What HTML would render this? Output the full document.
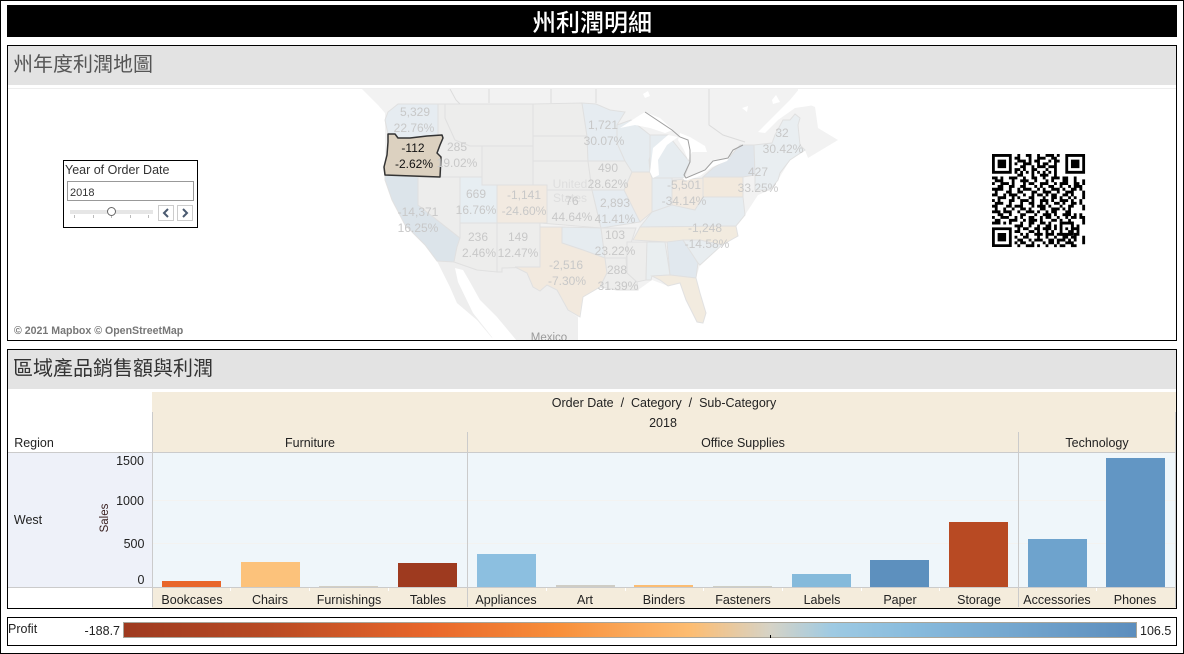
<!DOCTYPE html>
<html lang="zh-Hant">
<head>
<meta charset="utf-8">
<title>州利潤明細</title>
<style>
html,body{margin:0;padding:0;background:#fff;width:1184px;height:654px;overflow:hidden}
svg{display:block}
text{font-family:"Liberation Sans","Noto Sans CJK TC",sans-serif}
.l text{font-size:12px;fill:#c8c8c8;text-anchor:middle}
.t text{font-size:12.5px;fill:#222;text-anchor:middle}
.s polygon{stroke:#dedede;stroke-width:1}
</style>
</head>
<body>
<svg width="1184" height="654" viewBox="0 0 1184 654" xmlns="http://www.w3.org/2000/svg">
<defs>
<clipPath id="mc"><rect x="8" y="89" width="1168" height="251"/></clipPath>
<linearGradient id="lg" x1="0" x2="1" y1="0" y2="0">
<stop offset="0" stop-color="#9e3a1f"/>
<stop offset=".14" stop-color="#b84a23"/>
<stop offset=".3" stop-color="#e8662a"/>
<stop offset=".43" stop-color="#f88f3a"/>
<stop offset=".56" stop-color="#fdbd72"/>
<stop offset=".638" stop-color="#d6d3c6"/>
<stop offset=".7" stop-color="#9ecae3"/>
<stop offset=".78" stop-color="#88bbdd"/>
<stop offset="1" stop-color="#5b8dbd"/>
</linearGradient>
</defs>
<rect x=".5" y=".5" width="1183" height="653" fill="#fff" stroke="#000"/>
<rect x="7" y="5" width="1170" height="32" fill="#000"/>
<text x="592" y="31" font-size="24" font-weight="500" fill="#fff" text-anchor="middle">州利潤明細</text>

<rect x="7.5" y="45.5" width="1169" height="295" fill="#fff" stroke="#000"/>
<rect x="8" y="46" width="1168" height="39" fill="#e3e3e3"/>
<text x="13" y="71" font-size="20" fill="#555">州年度利潤地圖</text>
<rect x="8" y="88" width="1168" height="1" fill="#eee"/>

<g clip-path="url(#mc)">
<polygon fill="#f2f2f2" points="362,89 378,105 385,113 385,180 392,200 405,225 425,245 437,261 450,287 457,303 477,320 492,338 495,341 578,341 578,318 583,297 600,287 617,290 638,290 652,280 668,286 680,283 686,300 697,322 703,323 706,313 700,293 696,278 700,265 722,245 738,236 736,226 745,215 758,195 770,190 778,180 790,160 805,150 808,158 838,140 818,128 815,107 798,100 798,89"/>
<polygon fill="#eeeeee" points="437,261 454,262 477,270 497,272 502,272 502,268 515,267 527,273 533,287 540,291 547,285 557,290 568,310 578,318 578,341 495,341 477,320 457,303 450,287"/>
<polygon fill="#fff" points="455,268 463,270 470,282 480,300 497,317 517,341 493,341 492,337 473,313 458,282"/>
<polygon fill="#fff" points="758,132 778,112 790,100 800,88 842,88 842,102 815,105 795,108 778,120 765,133"/>
<g class="s" opacity=".85">
<polygon fill="#e4ecf1" points="388,112 398,104 438,104 438,135 427,136 410,138 398,138 395,134 388,134 385,120"/>
<polygon fill="#ededeb" points="438,104 445,104 445,118 455,140 470,146 482,146 482,177 441,177 441,157 437,153 440,145 443,138 442,135 438,135"/>
<polygon fill="#ededeb" points="445,104 533,104 533,146 470,146 455,140 445,118"/>
<polygon fill="#ebebea" points="482,146 533,146 533,185 482,185"/>
<polygon fill="#ededeb" points="533,104 582,103 587,136 533,136"/>
<polygon fill="#ededeb" points="533,136 587,136 588,161 533,161"/>
<polygon fill="#ededeb" points="533,161 588,161 592,190 547,190 547,185 533,185"/>
<polygon fill="#e4ecf1" points="582,103 596,104 610,110 625,112 617,125 617,143 625,161 588,161 587,136"/>
<polygon fill="#e5ecf0" points="617,125 631,120 650,135 650,147 652,150 649,160 650,172 630,172 625,161 617,143"/>
<polygon fill="#ededeb" points="588,161 625,161 632,172 624,190 592,190"/>
<polygon fill="#f2e9df" points="632,172 652,172 652,212 640,222 625,195 624,190"/>
<polygon fill="#e5ecf0" points="650,135 668,135 680,150 690,162 684,178 652,178 650,172"/>
<polygon fill="#e5ecf0" points="652,178 672,178 672,205 652,212"/>
<polygon fill="#f2e9df" points="672,180 703,178 703,197 695,210 675,208 672,205"/>
<polygon fill="#dde4ec" points="713,168 728,159 740,145 754,145 755,175 743,177 703,177"/>
<polygon fill="#f3e8da" points="703,177 743,177 743,197 703,197"/>
<polygon fill="#e5ecf0" points="640,227 652,212 672,205 695,210 703,197 743,197 745,215 736,226"/>
<polygon fill="#e8eef1" points="754,145 772,143 775,135 783,120 790,120 795,114 800,118 798,125 800,145 805,150 790,160 780,173 778,180 770,190 755,190 755,175"/>
<polygon fill="#d9e2e9" points="385,174 418,177 418,205 460,238 457,247 454,262 437,261 425,245 405,225 392,200 385,180"/>
<polygon fill="#ededeb" points="418,177 460,177 460,238 418,205"/>
<polygon fill="#e6eef2" points="460,177 482,177 482,185 497,185 497,223 460,223"/>
<polygon fill="#f2e9df" points="497,185 547,185 547,223 497,223"/>
<polygon fill="#ededeb" points="497,223 540,223 540,267 502,268 502,272 497,272"/>
<polygon fill="#ededeb" points="460,223 497,223 497,272 477,270 454,262 457,247 460,238"/>
<polygon fill="#ededeb" points="547,190 592,190 601,228 540,223 547,223"/>
<polygon fill="#e4ecf1" points="592,190 624,190 640,222 601,228"/>
<polygon fill="#e5ecf0" points="562,227 601,228 605,258 583,250 562,243"/>
<polygon fill="#ededeb" points="601,228 636,228 626,258 605,258"/>
<polygon fill="#f2e8db" points="540,227 562,227 562,243 583,250 605,258 607,273 600,287 583,297 580,317 568,310 557,290 547,285 540,291 533,287 527,273 515,267 540,267"/>
<polygon fill="#ededeb" points="605,258 626,258 627,273 637,282 638,290 617,290 600,287 607,273"/>
<polygon fill="#ededeb" points="627,242 647,242 646,280 637,282 627,273"/>
<polygon fill="#e8eef0" points="647,242 665,242 670,275 652,276 651,280 646,280"/>
<polygon fill="#f3eadc" points="633,240 640,227 736,226 738,236 722,245 700,240 667,242"/>
<polygon fill="#dfe7ee" points="667,242 683,240 698,263 696,278 670,275"/>
<polygon fill="#e7edf0" points="683,240 700,240 722,245 700,265 698,263"/>
<polygon fill="#f3eadc" points="652,276 670,275 696,278 700,293 706,313 703,323 697,322 686,300 680,283 668,286 660,280"/>
</g>
<g fill="#fff">
<polygon points="620,128 640,115 645,112 660,118 673,130 665,133 650,128 635,125"/>
<polygon points="650,172 653,148 668,135 678,137 667,145 658,160 659,175 653,178"/>
<polygon points="680,133 690,137 705,146 707,152 692,152 688,160 684,150 678,140"/>
<polygon points="683,178 706,170 713,160 730,157 727,161 712,167 700,176 685,181"/>
<polygon points="643,94 648,91 650,96 645,98"/>
<polygon points="742,108 748,106 747,112"/>
<polygon points="772,100 776,95 780,102 773,104"/>
</g>
<polyline fill="none" stroke="#a0a0a0" points="645,112 672,130 680,137 688,140 690,150 690,162 684,175 686,178 705,170 713,161 728,158 733,150 743,145"/>
<polyline fill="none" stroke="#dcdcdc" points="450,89 456,100 460,104"/>
<polyline fill="none" stroke="#dcdcdc" points="489,89 489,103"/>
<polyline fill="none" stroke="#dcdcdc" points="551,89 551,103"/>
<polyline fill="none" stroke="#dcdcdc" points="596,89 596,103"/>
<polyline fill="none" stroke="#dcdcdc" points="709,89 709,125 723,135 745,142"/>
<polygon fill="#dcd1c0" stroke="#333" stroke-width="1.5" stroke-linejoin="round" points="388,134 395,134 398,138 410,138 427,136 442,135 443,138 440,145 437,153 441,157 440,177 385,175 384,167 387,155 388,142"/>
<g class="l">
<text x="415" y="116">5,329</text><text x="414" y="132">22.76%</text>
<text x="457" y="151">285</text><text x="457" y="167">19.02%</text>
<text x="476" y="198">669</text><text x="476" y="214">16.76%</text>
<text x="524" y="199">-1,141</text><text x="524" y="215">-24.60%</text>
<text x="570" y="188" style="fill:#dedede">United</text><text x="570" y="202" style="fill:#dedede">States</text>
<text x="572" y="205">76</text><text x="572" y="221">44.64%</text>
<text x="603" y="129">1,721</text><text x="604" y="145">30.07%</text>
<text x="608" y="172">490</text><text x="608" y="188">28.62%</text>
<text x="615" y="207">2,893</text><text x="615" y="223">41.41%</text>
<text x="684" y="189">-5,501</text><text x="684" y="205">-34.14%</text>
<text x="758" y="176">427</text><text x="758" y="192">33.25%</text>
<text x="782" y="137">32</text><text x="783" y="153">30.42%</text>
<text x="418" y="216">-14,371</text><text x="418" y="232">16.25%</text>
<text x="478" y="241">236</text><text x="479" y="257">2.46%</text>
<text x="518" y="241">149</text><text x="518" y="257">12.47%</text>
<text x="566" y="269">-2,516</text><text x="567" y="285">-7.30%</text>
<text x="615" y="239">103</text><text x="615" y="255">23.22%</text>
<text x="617" y="274">288</text><text x="618" y="290">31.39%</text>
<text x="705" y="232">-1,248</text><text x="707" y="248">-14.58%</text>
<text x="549" y="341" style="fill:#9a9a9a;font-size:11.5px">Mexico</text>
</g>
</g>
<text x="413" y="152" font-size="12" fill="#111" text-anchor="middle">-112</text>
<text x="414" y="168" font-size="12" fill="#111" text-anchor="middle">-2.62%</text>
<text x="14" y="334" font-size="10.6" font-weight="700" fill="#777">© 2021 Mapbox © OpenStreetMap</text>

<rect x="63.5" y="160.5" width="134" height="67" fill="#fff" stroke="#000"/>
<text x="65" y="174" font-size="12.5" fill="#333">Year of Order Date</text>
<rect x="67.5" y="181.5" width="126" height="19" fill="#fff" stroke="#999"/>
<text x="70" y="196" font-size="11" fill="#333">2018</text>
<rect x="70" y="210" width="83" height="4" fill="#e6e6e6"/>
<path d="M74.5 215v3M93.5 215v3M111.5 215v3M130.5 215v3M148.5 215v3" stroke="#bbb" fill="none"/>
<circle cx="111.5" cy="211.5" r="4" fill="#fff" stroke="#666"/>
<rect x="158.5" y="205.5" width="15" height="15" fill="#fff" stroke="#ccc"/>
<rect x="177.5" y="205.5" width="15" height="15" fill="#fff" stroke="#ccc"/>
<path d="M168 209l-4 4 4 4" fill="none" stroke="#4a5a70" stroke-width="2"/>
<path d="M183 209l4 4-4 4" fill="none" stroke="#4a5a70" stroke-width="2"/>

<g transform="translate(992 154) scale(2.82)">
<path fill="#000" fill-rule="evenodd" d="M0 0h7v7H0zM1 1v5h5V1zM2 2h3v3H2zM26 0h7v7h-7zM27 1v5h5V1zM28 2h3v3h-3zM0 26h7v7H0zM1 27v5h5v-5zM2 28h3v3H2zM24 24h5v5h-5zM25 25v3h3v-3zM26 26h1v1h-1z"/>
<path fill="none" stroke="#000" stroke-width="1.02" d="
M9 .5h1m2 0h2m2 0h1m2 0h3m1 0h1
M8 1.5h2m3 0h1m2 0h3m2 0h2
M9 2.5h3m1 0h1m1 0h2m3 0h1m1 0h2
M8 3.5h1m2 0h3m2 0h1m1 0h2m2 0h1
M10 4.5h2m2 0h1m1 0h3m1 0h3
M8 5.5h2m1 0h1m2 0h2m3 0h1m2 0h1
M8 6.5h1m1 0h1m1 0h1m1 0h1m1 0h1m1 0h1m1 0h1m1 0h1
M9 7.5h2m3 0h1m2 0h3m2 0h1
M0 8.5h2m1 0h1m2 0h3m2 0h1m2 0h2m2 0h1m2 0h3m1 0h2m2 0h1
M1 9.5h3m3 0h1m2 0h3m2 0h1m3 0h1m1 0h1m3 0h2m2 0h1
M0 10.5h1m2 0h3m1 0h1m3 0h1m1 0h2m2 0h3m2 0h1m1 0h3m2 0h2
M2 11.5h2m2 0h2m2 0h2m3 0h1m1 0h1m2 0h2m2 0h1m2 0h1m1 0h2
M0 12.5h4m2 0h1m2 0h1m1 0h3m2 0h1m1 0h1m2 0h3m1 0h1m2 0h2
M1 13.5h1m3 0h2m2 0h2m3 0h2m2 0h3m2 0h1m2 0h3
M0 14.5h2m2 0h1m1 0h3m2 0h1m2 0h1m1 0h2m1 0h1m1 0h2m2 0h2m1 0h1
M2 15.5h3m2 0h1m1 0h1m3 0h2m3 0h1m2 0h2m1 0h1m2 0h1m1 0h1
M0 16.5h1m1 0h1m3 0h2m2 0h3m1 0h1m2 0h3m1 0h1m2 0h3m1 0h1
M1 17.5h3m2 0h1m3 0h1m2 0h2m2 0h1m1 0h1m2 0h2m1 0h1m2 0h2
M0 18.5h2m3 0h2m1 0h3m3 0h1m1 0h3m1 0h1m3 0h1m2 0h2
M1 19.5h1m2 0h1m2 0h1m2 0h2m1 0h1m3 0h2m2 0h3m1 0h1m1 0h1
M0 20.5h3m1 0h3m2 0h1m2 0h3m1 0h1m2 0h1m1 0h2m3 0h2
M2 21.5h2m2 0h1m3 0h2m3 0h1m2 0h3m1 0h1m2 0h3m1 0h1
M0 22.5h1m2 0h3m2 0h1m1 0h1m2 0h2m2 0h1m1 0h2m2 0h1m2 0h1m1 0h2
M1 23.5h2m3 0h3m2 0h1m1 0h3m1 0h1m3 0h2m1 0h1m2 0h1
M0 24.5h3m1 0h1m1 0h1m3 0h1m2 0h2m2 0h2m1 0h1m6 0h2
M8 25.5h3m2 0h1m2 0h1m2 0h2m1 0h1m5 0h1m1 0h1
M9 26.5h1m1 0h2m2 0h2m1 0h3m1 0h1m5 0h3
M8 27.5h2m3 0h2m1 0h1m2 0h1m1 0h1m5 0h1m2 0h1
M10 28.5h1m1 0h1m2 0h3m1 0h3m1 0h5m1 0h2
M8 29.5h1m2 0h2m3 0h1m2 0h1m2 0h1m2 0h2m1 0h2
M9 30.5h2m2 0h1m1 0h3m2 0h2m1 0h3m1 0h1m1 0h1
M8 31.5h1m1 0h2m2 0h1m3 0h1m1 0h2m1 0h1m2 0h3
M9 32.5h1m2 0h3m1 0h1m2 0h1m2 0h1m1 0h2m2 0h2
M32.5 9v2m0 2v3m0 2v2m0 2v3m0 4v3
M31.500 11v2m0 3v2m0 3v2"/>
</g>

<rect x="7.5" y="349.5" width="1169" height="259" fill="#fff" stroke="#000"/>
<rect x="8" y="350" width="1168" height="39" fill="#e3e3e3"/>
<text x="13" y="375" font-size="20" fill="#333">區域產品銷售額與利潤</text>

<rect x="152" y="392" width="1024" height="60" fill="#f4ecdc"/>
<rect x="8" y="453" width="144" height="134" fill="#eef1f9"/>
<rect x="153" y="453" width="1023" height="134" fill="#eff6fa"/>
<rect x="152" y="588" width="1024" height="20" fill="#f4ecdc"/>
<path d="M153 500.500H1176M153 543.500H1176" stroke="#f3f3f1" fill="none"/>
<g>
<rect x="162" y="581" width="59" height="6" fill="#e8662a"/>
<rect x="241" y="562" width="59" height="25" fill="#fcc27b"/>
<rect x="319" y="586" width="59" height="1" fill="#d3cfc4"/>
<rect x="398" y="563" width="59" height="24" fill="#9e3a1f"/>
<rect x="477" y="554" width="59" height="33" fill="#8cbfe0"/>
<rect x="556" y="585" width="59" height="2" fill="#cfcdc5"/>
<rect x="634" y="585" width="59" height="2" fill="#fbbd73"/>
<rect x="713" y="586" width="59" height="1" fill="#cfcfc5"/>
<rect x="792" y="574" width="59" height="13" fill="#85badb"/>
<rect x="870" y="560" width="59" height="27" fill="#5d90be"/>
<rect x="949" y="522" width="59" height="65" fill="#b84a23"/>
<rect x="1028" y="539" width="59" height="48" fill="#6ea3cd"/>
<rect x="1106" y="458" width="59" height="129" fill="#6296c4"/>
</g>
<path d="M8 452.500H1176M8 587.500H1176M152.500 412V607M467.500 432V607M1018.500 432V607M1175.500 412V607" stroke="#cbcbcb" fill="none"/>
<path d="M230.500 588v3M309.500 588v3M388.500 588v3M546.500 588v3M625.500 588v3M703.500 588v3M782.500 588v3M861.500 588v3M939.500 588v3M1096.500 588v3" stroke="#fff" fill="none"/>

<g class="t">
<text x="664" y="407">Order Date &#160;/&#160; Category &#160;/&#160; Sub-Category</text>
<text x="663" y="427">2018</text>
<text x="310" y="447">Furniture</text>
<text x="743" y="447">Office Supplies</text>
<text x="1097" y="447">Technology</text>
<text x="192" y="604">Bookcases</text>
<text x="270" y="604">Chairs</text>
<text x="349" y="604">Furnishings</text>
<text x="428" y="604">Tables</text>
<text x="506" y="604">Appliances</text>
<text x="585" y="604">Art</text>
<text x="664" y="604">Binders</text>
<text x="743" y="604">Fasteners</text>
<text x="822" y="604">Labels</text>
<text x="900" y="604">Paper</text>
<text x="979" y="604">Storage</text>
<text x="1057" y="604">Accessories</text>
<text x="1135" y="604">Phones</text>
<text x="34" y="447">Region</text>
<text x="28" y="524">West</text>
<text x="130" y="465">1500</text>
<text x="130" y="505">1000</text>
<text x="134" y="548">500</text>
<text x="141" y="584">0</text>
<text transform="translate(108 518) rotate(-90)" style="font-size:11.500px;fill:#3a2020">Sales</text>
</g>

<rect x="7.500" y="617.500" width="1169" height="28" fill="#fff" stroke="#000"/>
<text x="8" y="633" font-size="12.500" fill="#222">Profit</text>
<text x="120" y="635" font-size="12.500" fill="#222" text-anchor="end">-188.7</text>
<rect x="123.500" y="622.500" width="1013" height="15" fill="url(#lg)" stroke="#a8a59a"/>
<path d="M770.500 635v3" stroke="#000" fill="none"/>
<text x="1140" y="635" font-size="12.500" fill="#222">106.5</text>
</svg>
</body>
</html>
